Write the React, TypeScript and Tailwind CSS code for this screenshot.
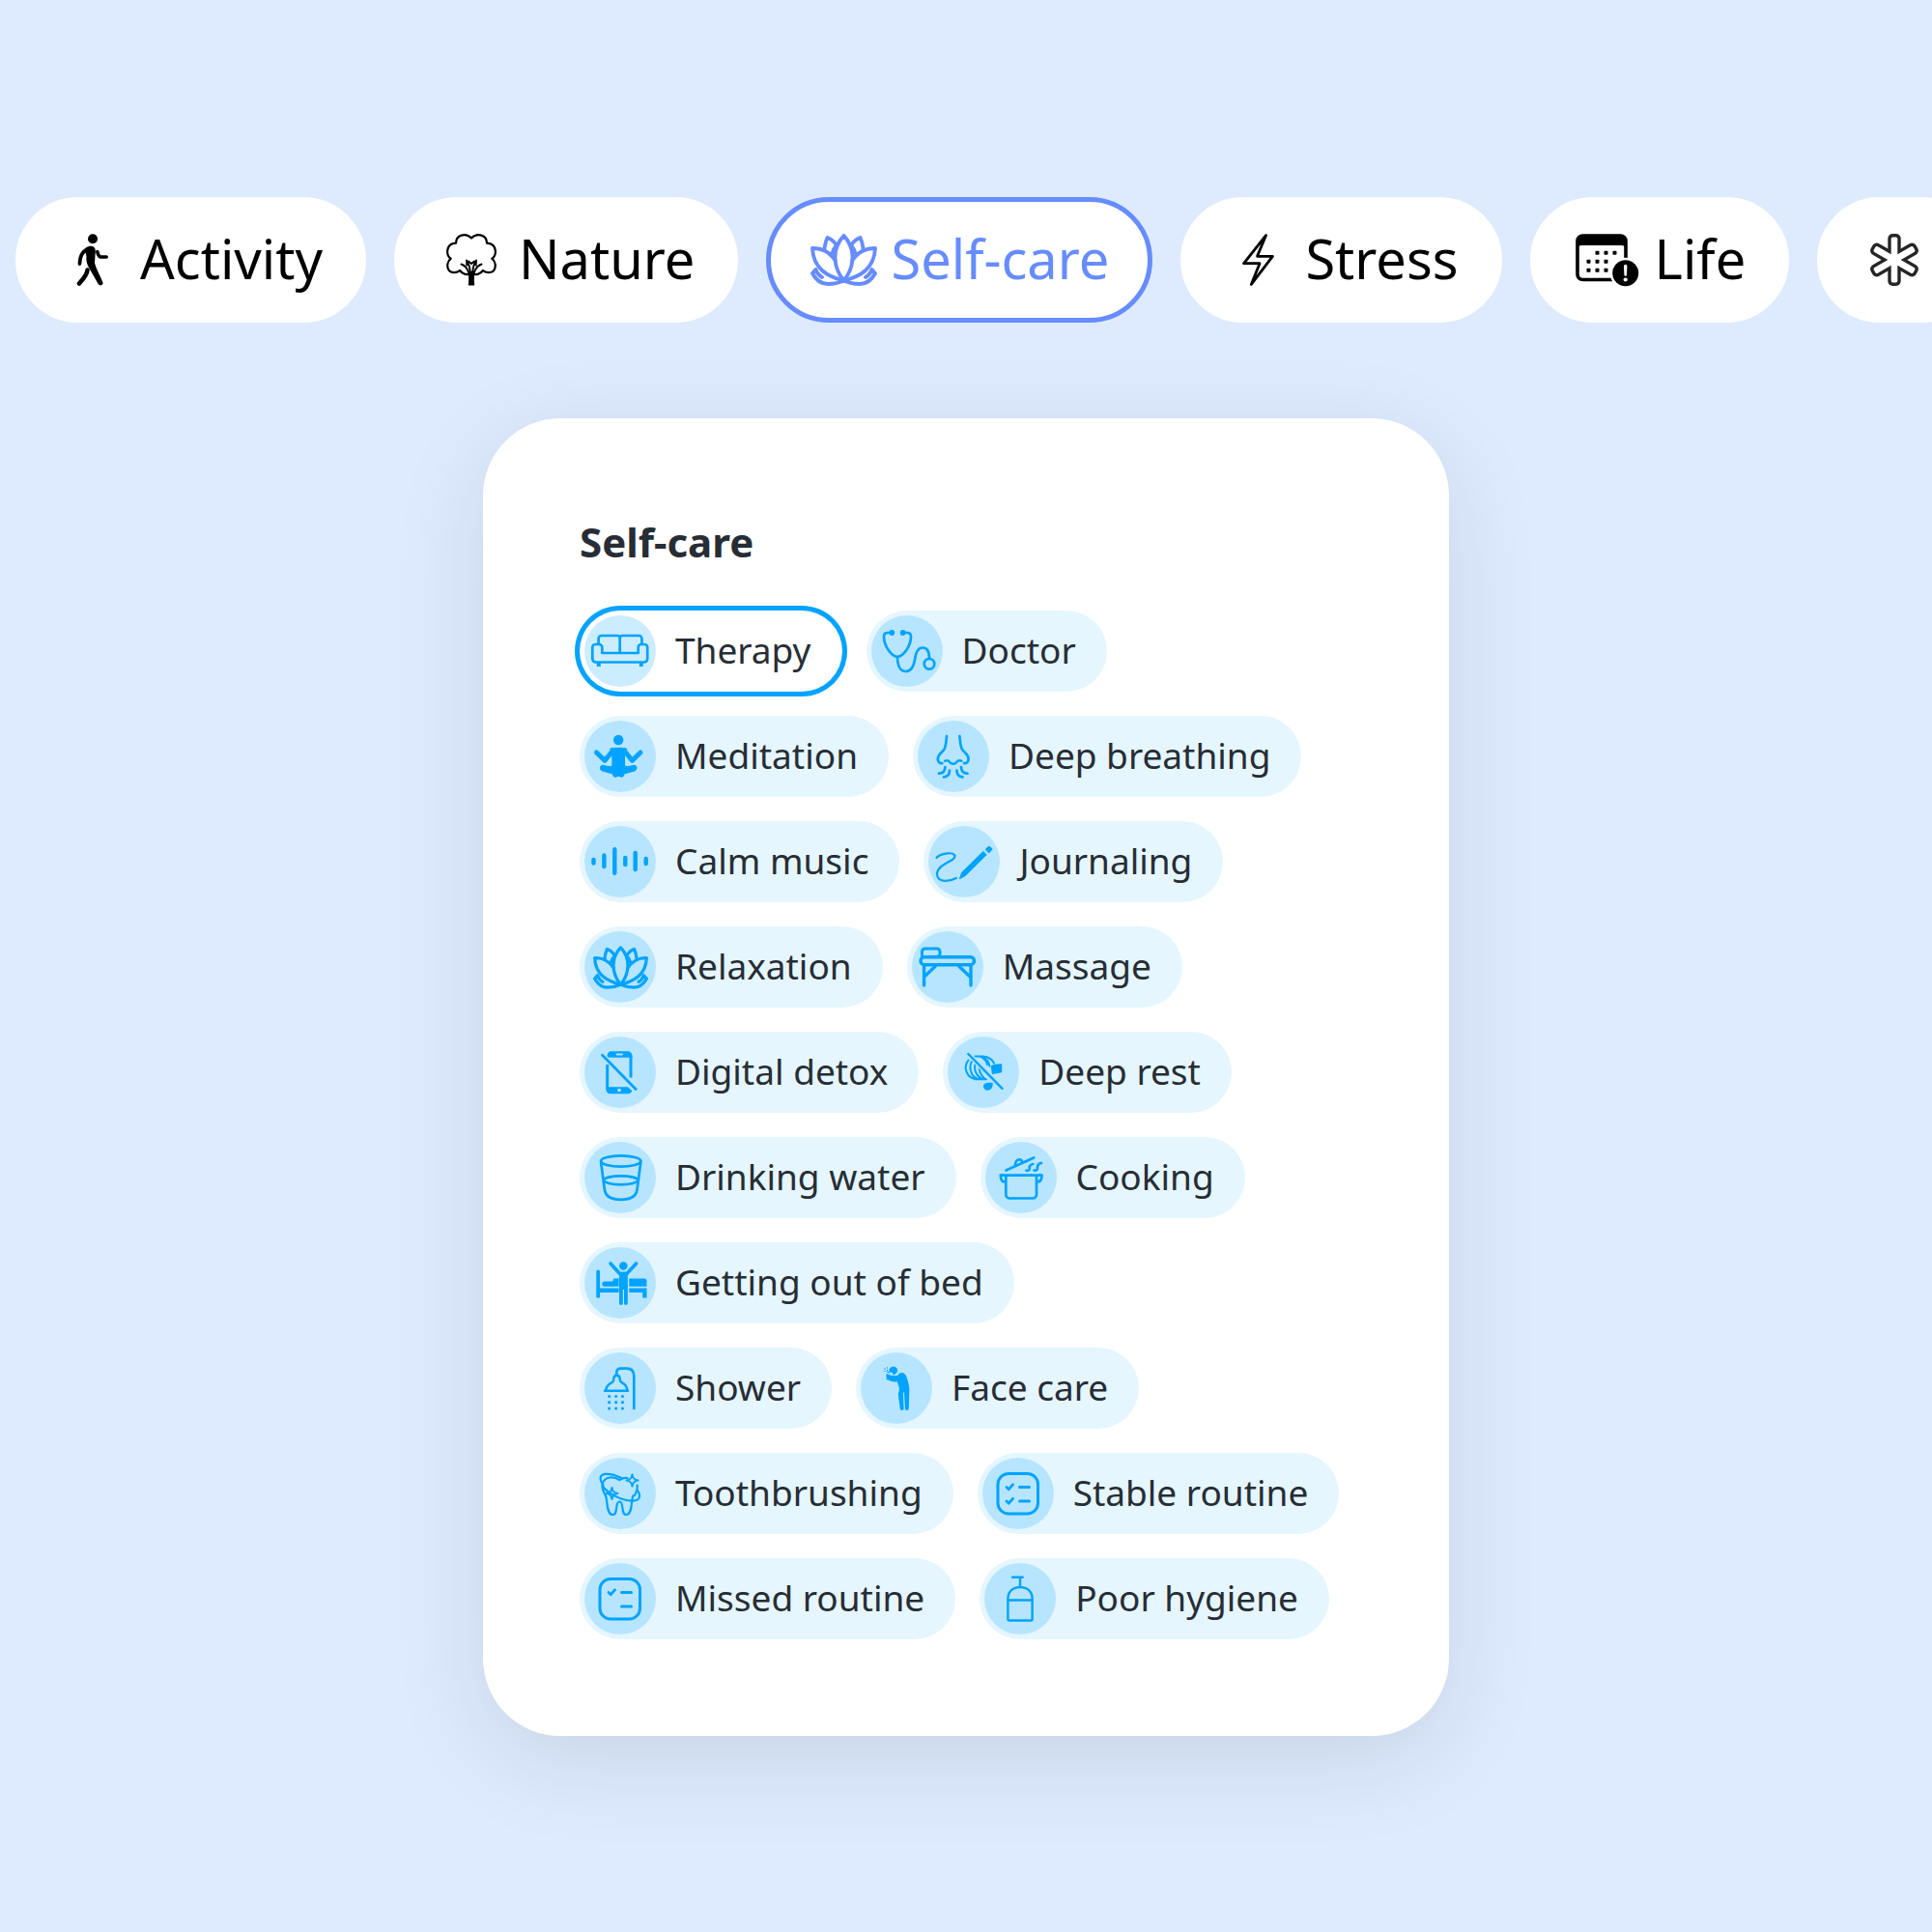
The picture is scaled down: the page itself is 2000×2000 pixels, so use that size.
import { ReactNode, useState } from "react";

const Lotus = ({ className = "" }: { className?: string }) => (
  <svg viewBox="0 0 69 54" className={className} fill="none" stroke="currentColor" strokeWidth="3.900" strokeLinejoin="round" strokeLinecap="round">
    <path d="M34.500 2C28 9 25 18 25.500 26c.5 10 4.500 17 9 22.500 4.500-5.500 8.500-12.500 9-22.500C44 18 41 9 34.500 2Z" />
    <path d="M34.500 48.500C17 44 3 36 2 15c9-.7 18 4 23.500 12.500M34.500 48.500C52 44 66 36 67 15c-9-.7-18 4-23.500 12.500" />
    <path d="M14.500 15.500C15 11 16 7 17.500 4c4 1.500 7.500 4.500 9.800 8.500M22.500 20c1-3.500 2.500-6 4.800-8M54.500 15.500C54 11 53 7 51.500 4c-4 1.500-7.500 4.500-9.800 8.500M46.500 20c-1-3.500-2.500-6-4.800-8" />
    <path d="M5.500 37 2 41C6 48.500 11 52 18 52c6 0 11-1 16.500-3.500M5.500 37C7 41 9 43.500 12 45M63.500 37l3.500 4C63 48.500 58 52 51 52c-6 0-11-1-16.500-3.500M63.500 37C62 41 60 43.500 57 45" />
  </svg>
);

const Walking = () => (
  <svg viewBox="0 0 34 54" className="h-[54px] w-[34px]" fill="none" stroke="currentColor" strokeLinecap="round" strokeLinejoin="round">
    <circle cx="17" cy="5.200" r="5" fill="currentColor" stroke="none" />
    <path d="M9 16c1.500-2 4-3.500 6.500-3.300 3.500.3 4.500 3 4.300 6L19 30c1 5 6 14 8.500 20.500.5 2.500-3 4-4.800 1.600L13 35c-2-4-3-7-2.500-11Z" fill="currentColor" stroke="none" />
    <path d="M12 15.500C7 18.500 4 21.500 3.500 31" strokeWidth="3.800" />
    <path d="M11.500 37.500C11 43 7 47 3 51.500" strokeWidth="4.500" />
    <path d="M21.800 18.500c.6 3.500 1.200 4.500 3 5.500h6.400" strokeWidth="3.600" />
  </svg>
);

const Tree = () => (
  <svg viewBox="0 0 54 54" className="h-[54px] w-[54px]" fill="none" stroke="currentColor" strokeWidth="2.200" strokeLinecap="round" strokeLinejoin="round">
    <path d="M15 38c-2.500 2.800-9.500 3-11.500-.5-2.300-4-1.300-9 2.200-11.800C1 22.500-.5 10.500 11 9.700 11 1 21-1.500 27 4.500 33-1.500 43 1 43 9.700c11.500.8 10 12.800 5.300 16 3.500 2.800 4.500 7.800 2.200 11.800-2 3.500-9 3.300-11.500.5-2 2.500-6 4.300-9 4M15 38c2 2.500 6 4.300 9 4" />
    <path d="M24.700 52.700c.6-5 .6-10-.7-13h6c-1.300 3-1.300 8-.7 13Z" fill="currentColor" strokeWidth="1.800" />
    <path d="M24 40c-1.200-4-3.200-7-7.500-8.500M30 40c1.200-4 3.200-7 7.500-8.500M25.800 40c-.3-5-1.600-9-3.800-12.500l.3 5M28.200 40c.3-5 1.600-9 3.800-12.500l-.3 5M24 28.500l3 2.500 3-2.500" strokeWidth="1.900" />
  </svg>
);

const Bolt = () => (
  <svg viewBox="0 0 33 54" className="h-[54px] w-[33px]" fill="none" stroke="currentColor" strokeWidth="2.800" strokeLinejoin="round">
    <path d="M24.500 1.600 1.600 30.700H18L9.300 52.400 31.400 23.300H15.500Z" />
  </svg>
);

const CalendarAlert = () => (
  <svg viewBox="0 0 66 55" className="h-[55px] w-[66px]">
    <rect x="2" y="2" width="50" height="45.500" rx="5.500" fill="none" stroke="currentColor" strokeWidth="3.600" />
    <path d="M2 16V6a5 5 0 0 1 5-5h40a5 5 0 0 1 5 5v10c0-2.500-2-4-4-4H6c-2 0-4 1.500-4 4Z" fill="currentColor" />
    {[[22.5, 19.7], [31.5, 19.7], [40.5, 19.7], [13.5, 28.7], [22.5, 28.7], [31.5, 28.7], [13.5, 37.7], [22.5, 37.7], [31.5, 37.7]].map(([x, y]) => (
      <rect key={`${x}-${y}`} x={x - 2} y={y - 2} width="4" height="4" rx=".8" fill="currentColor" />
    ))}
    <circle cx="51.700" cy="40.700" r="16" fill="white" />
    <circle cx="51.700" cy="40.700" r="13.500" fill="currentColor" />
    <path d="M50 33.500a1.700 1.700 0 0 1 3.400 0L53 42.500a1.300 1.300 0 0 1-2.600 0Z" fill="white" />
    <circle cx="51.700" cy="47.500" r="2.100" fill="white" />
  </svg>
);

const Asterisk = () => (
  <svg viewBox="0 0 54 54" className="h-[54px] w-[54px]">
    {[0, 60, 120].map((a) => (
      <rect key={a} x="20.300" y="0" width="13.400" height="54" rx="5" fill="#262626" transform={`rotate(${a} 27 27)`} />
    ))}
    {[0, 60, 120].map((a) => (
      <rect key={a} x="23.700" y="3.400" width="6.600" height="47.200" rx="1.800" fill="white" transform={`rotate(${a} 27 27)`} />
    ))}
  </svg>
);

const checklist = (
  <>
    <rect x="16" y="16.500" width="41.500" height="41.500" rx="11" strokeWidth="3" />
    <path d="M38.500 30.500h10M38.500 45h10" strokeWidth="3" />
    <path d="m25 30.500 2.300 2.200 4.200-4.900" strokeWidth="2.800" />
  </>
);

// all chip icons are drawn on a 74x74 grid, the size of the round badge
const icons: Record<string, ReactNode> = {
  sofa: (
    <>
      <path d="M14.600 29.500V24a3 3 0 0 1 3-3H34a2.700 2.700 0 0 1 2.700 2.700V39M36.700 23.700A2.700 2.700 0 0 1 39.400 21h17a3 3 0 0 1 3 3v5.500" />
      <path d="M18.300 39h37.400v-6a3 3 0 0 1 3-3h3.500a3 3 0 0 1 3 3v12a3.500 3.500 0 0 1-3.500 3.500H11.800A3.500 3.500 0 0 1 8.300 45V33a3 3 0 0 1 3-3h4a3 3 0 0 1 3 3Z" />
      <path d="M14.800 49v4M58.800 49v4" strokeWidth="4" strokeLinecap="butt" />
    </>
  ),
  stethoscope: (
    <>
      <path d="M21 18h-4c-3 0-4 1.500-4 4 0 9 7 20 14 21 7-1 14-12 14-21 0-2.500-1-4-4-4h-4" />
      <path d="M27 43c0 9 3 15 8.500 15 6.500 0 8.500-6 9.500-12 1-8 3-12.500 8-12.500s7 4.500 7 11" />
      <circle cx="60" cy="50.300" r="5.300" />
      <circle cx="21.300" cy="18" r="2.900" fill="currentColor" stroke="none" />
      <circle cx="32.700" cy="18" r="2.900" fill="currentColor" stroke="none" />
    </>
  ),
  meditation: (
    <>
      <circle cx="35.200" cy="20" r="5.200" fill="currentColor" stroke="none" />
      <path d="m12.500 33 8.500 8.300 8-9.800M58 33l-8.500 8.300-8-9.800" strokeWidth="5" />
      <path d="M27 29c1.500-1 14.500-1 16.500 0l-2 6v12c4 1.500 7-.5 10.500-.7 2.500 0 2.500 4.500.5 5.500L41 55c0 2-1 3.500-3 3.200l-2.800-1-2.800 1c-2 .3-3-1-3-3.200l-11.500-3.200c-2-1-2-5.500.5-5.500 3.500.2 7 2.200 10.500.7V35Z" fill="currentColor" strokeWidth="1" />
    </>
  ),
  nose: (
    <>
      <path d="M30 16c-.4 5-.9 10-2.200 13C26 33 20.800 34 20.800 40c0 3 2.200 4.400 4.400 4.200M43.400 16c.4 5 .9 10 2.200 13 1.800 4 7 5 7 11 0 3-2.200 4.400-4.400 4.200" />
      <path d="M28 41.800c2.600-1.300 4-.6 5 .9 2 2.700 5.500 2.700 7.500 0 1-1.500 2.400-2.200 5-.9" strokeWidth="2.400" />
      <path d="M28.400 48c0 4-2 6.500-6.500 6.700M33 51.500c0 4-2 6.600-6 6.900M45 48c0 4 2 6.500 6.500 6.700M40.500 51.500c0 4 2 6.600 6 6.900" />
    </>
  ),
  wave: <path d="M9.500 35v3.500M20.400 30.500v11.500M31.300 24.300v24.400M42.300 33v7M52.700 28v17M63.700 34v5" strokeWidth="4.400" />,
  pen: (
    <>
      <path d="M8.500 33C12 29 24 26.500 27 30c2.500 3.500-5 6.500-10 9.500-6 3.500-9.500 8-7.500 13 2 6 13 5 19.500 1.500" strokeWidth="2.200" />
      <path d="m32.500 54.500 2.300-6.500 22-21.500 3.400 3.300-21.700 21.500Z" fill="currentColor" strokeWidth="1" />
      <path d="m60 24.300 2.800-2.600 2.600 2.400-2.700 2.900Z" fill="currentColor" strokeWidth="2" />
    </>
  ),
  massage: (
    <>
      <rect x="9" y="26.800" width="55.500" height="8" rx="4" strokeWidth="3.400" />
      <path d="M10.500 26V21a3 3 0 0 1 3-3h12.500a3 3 0 0 1 3 3v2.500a2.500 2.500 0 0 1-2.500 2.500" strokeWidth="3" />
      <path d="M12.600 36v20M61 36v20M24 36.500 13.500 46.500M49 36.500l10.500 10" strokeWidth="3.400" />
    </>
  ),
  phone: (
    <>
      <path d="M23.700 29v25M48 20v22.500" strokeWidth="3" strokeLinecap="butt" />
      <path d="M23.500 20.500c0-3 1.500-5.300 4-5.300h17c3 0 5 2 5 5v1.500H25.300Z" fill="currentColor" stroke="none" />
      <path d="M22.300 52.300H45l4.300 4c-.6 1.900-2.400 3-4.800 3H27c-3 0-4.700-2-4.700-4.600Z" fill="currentColor" stroke="none" />
      <path d="M33.500 18.500h5.500" className="stroke-[#b7e5ff]" strokeWidth="1.800" />
      <circle cx="36" cy="55.600" r="1.800" className="fill-[#b7e5ff]" stroke="none" />
      <path d="m18.500 19.300 34.700 35.200" strokeWidth="2.800" />
    </>
  ),
  rest: (
    <>
      <path d="M21.500 24.500c-5.500 6-3 19.500 10 19.800M25.200 25.500c-3.500 5.500-2 17 7.800 18.800M29 28c-2.500 5.500.5 13 6.500 16M33 31.500c-1 5 2 9 5.500 12.500M28.500 44.300H40" strokeWidth="2" />
      <path d="M28.500 20.500h8c5.500.5 9.500 3 11.500 7M33 20.700c6 1 9.500 5 10.500 10M36 22c3 2 4.500 4 5 7" strokeWidth="2" />
      <path d="m45.500 31 3-1.500 7-.5v7.500l-9 1.700Z" fill="currentColor" strokeWidth="1.400" />
      <path d="M37 51.500c0-3.500 4-4.300 9.800-3.500 0 5-2 7.700-5.300 7.700-2.700 0-4.500-1.700-4.500-4.200Z" fill="currentColor" stroke="none" />
      <path d="m21.500 18.200 35 35.500" strokeWidth="5" className="stroke-[#b7e5ff]" />
      <path d="m21.300 18 35.200 35.800" strokeWidth="2.400" />
    </>
  ),
  glass: (
    <>
      <ellipse cx="37.700" cy="20" rx="20.600" ry="5.600" />
      <path d="m17.100 21 3.700 28c.8 7.500 7.500 10.800 16.900 10.800s16.100-3.300 16.900-10.800l3.700-28" />
      <ellipse cx="37.700" cy="39.800" rx="17.500" ry="4.500" />
    </>
  ),
  pot: (
    <>
      <path d="M17 34.700h41M21.300 35v19.500a4 4 0 0 0 4 4H49a4 4 0 0 0 4-4V35" />
      <path d="M20.500 41.500c-3.500 0-4.700-3-4.700-6.800h2M53.800 41.500c3.500 0 4.700-3 4.700-6.800h-2" />
      <path d="m21.500 29.500 28.700-13M31 25c-.5-4.500 2-6.700 4.300-6.700 1.700 0 2.700 1 3.200 3" />
      <path d="M42.500 29.700c5 .3 2.500-2.500 3.500-4.500.6-1.500 1.500-2 3.400-2.200M50.500 29.700c5 .3 2.800-3 3.800-5 .7-1.700 1.500-2.500 3.700-2.700" />
    </>
  ),
  bed: (
    <>
      <path d="M12.300 25.500a1.900 1.900 0 0 1 3.800 0V42.500h19.500v4.500H16.100v5.500h-3.800Z" fill="currentColor" stroke="none" />
      <path d="M21 35.500h8l1.500-3h5.100v8.300H21a2.600 2.600 0 0 1 0-5.300ZM46.300 32.500H62a2.500 2.500 0 0 1 2.500 2.500v5.800H46.300ZM46.300 42.500h18.200v10h-4.300V47H46.300Z" fill="currentColor" stroke="none" />
      <circle cx="40.300" cy="19.500" r="4.300" fill="currentColor" stroke="none" />
      <path d="m27 17 10.500 11.500M53.600 17 43 28.500" strokeWidth="3.600" />
      <path d="M36 26.500c2.500-1.500 6.500-1.500 8.800 0V58a1.900 1.900 0 0 1-3.800 0V44h-1.200v14a1.900 1.900 0 0 1-3.800 0Z" fill="currentColor" stroke="none" />
    </>
  ),
  shower: (
    <>
      <path d="M51.300 58V24.500c0-5-3-7.800-7.800-7.800h-5.800c-3 0-4.400 1.500-4.400 4.600v2" />
      <path d="M21 39.700h24M22 39.200c.8-5 3.500-6.500 6-7.800 2-1 2.300-1.500 2.300-3.900 0-5 6.400-5 6.400 0 0 2.400.3 2.900 2.300 3.900 2.500 1.300 4.700 2.800 5.500 7.800" strokeWidth="2.400" />
      {[45.5, 51.7, 58].map((y) => (
        <path key={y} d={`M25.700 ${y}h.01M32.700 ${y}h.01M39.400 ${y}h.01`} strokeWidth="3.200" />
      ))}
    </>
  ),
  face: (
    <>
      <path d="M30 17c1-2.500 6-3 7.500 0 1 3-1 6-4 5.800 0-2-1.500-2.600-3.500-2.800Z" fill="currentColor" strokeWidth=".6" />
      <path d="M38.500 23.500c2.500-4 7.500-3 9 2 1.500 5 3 9 2.800 14L49.800 58a1.900 1.900 0 0 1-3.900 0L45 41l-1 1 .6 16a1.900 1.900 0 0 1-3.900 0L39 45c-.4-4 1.500-6 .7-9l-2.200-6c-1.500 1-6-.5-11-3.700V22c3 1 8 3.500 12 1.500Z" fill="currentColor" stroke="none" />
      <path d="M27 27.500c3 1.500 5.500 2.400 8.500 2.500M27.500 20l2 1" strokeWidth="1.200" />
      <path d="M25 17h.01M25 19.500h.01M27.500 16h.01M27.500 18.500h.01" strokeWidth="1.300" />
    </>
  ),
  tooth: (
    <>
      <path d="M36.200 23c-5-3.500-15-4.500-17.500 4-1.200 5 1 8 3.300 12.500 2 4.500.5 19.500 7.300 19.500 6 0 1.900-13.500 7-13.500s1 13.500 7 13.500c6.500 0 5-14.500 7-19.500M36.200 23c3-2 5.300-2.300 8.300-2M54.500 28.500c1 4-.5 7-2.500 10.500" strokeWidth="2.200" />
      <path d="M19.500 28.500c-4.500-6.500-4-11.500 3-11.700 5.500-.1 10.500 1.500 15.700 4.200M18.800 29.500c5 7 19 15 30.200 15.200 9 0 9.500-5.500 6-10.700" strokeWidth="2.200" />
      <path d="M49.500 17.500c.6 4 2 5.400 6 6-4 .6-5.400 2-6 6-.6-4-2-5.400-6-6 4-.6 5.400-2 6-6ZM28.500 31c.6 4 2 5.400 6 6-4 .6-5.400 2-6 6-.6-4-2-5.400-6-6 4-.6 5.400-2 6-6Z" strokeWidth="2" />
    </>
  ),
  stable: (
    <>
      {checklist}
      <path d="m25 45 2.300 2.200 4.200-4.900" strokeWidth="2.800" />
    </>
  ),
  missed: checklist,
  bottle: (
    <path d="M29 14.800h10.700M37 15v10M24.400 38.500h25.200M24.400 58V37c0-7.500 5.500-12 12.600-12s12.600 4.500 12.600 12v21a1.500 1.500 0 0 1-1.500 1.500H25.900a1.500 1.500 0 0 1-1.500-1.500Z" strokeWidth="2.400" />
  ),
};

const categories = [
  { label: "Activity", icon: <Walking /> },
  { label: "Nature", icon: <Tree /> },
  { label: "Self-care", icon: <Lotus className="h-[54px] w-[69px]" /> },
  { label: "Stress", icon: <Bolt /> },
  { label: "Life", icon: <CalendarAlert /> },
  { label: "", icon: <Asterisk /> },
];

const rows = [
  [{ label: "Therapy", icon: "sofa" }, { label: "Doctor", icon: "stethoscope" }],
  [{ label: "Meditation", icon: "meditation" }, { label: "Deep breathing", icon: "nose" }],
  [{ label: "Calm music", icon: "wave" }, { label: "Journaling", icon: "pen" }],
  [{ label: "Relaxation", icon: "lotus" }, { label: "Massage", icon: "massage" }],
  [{ label: "Digital detox", icon: "phone" }, { label: "Deep rest", icon: "rest" }],
  [{ label: "Drinking water", icon: "glass" }, { label: "Cooking", icon: "pot" }],
  [{ label: "Getting out of bed", icon: "bed" }],
  [{ label: "Shower", icon: "shower" }, { label: "Face care", icon: "face" }],
  [{ label: "Toothbrushing", icon: "tooth" }, { label: "Stable routine", icon: "stable" }],
  [{ label: "Missed routine", icon: "missed" }, { label: "Poor hygiene", icon: "bottle" }],
];

const Tag = ({ label, icon, selected, onClick }: { label: string; icon: string; selected: boolean; onClick: () => void }) => (
  <button
    type="button"
    aria-pressed={selected}
    onClick={onClick}
    className={`flex h-[84px] shrink-0 items-center gap-5 rounded-full pl-[5px] pr-8 text-[37px] leading-[50px] text-[#272d35] ${
      selected ? "bg-white ring-[5px] ring-[#00a3ff]" : "bg-[#00a3ff]/10"
    }`}
  >
    <span className="flex size-[74px] shrink-0 items-center justify-center rounded-full bg-[#00a3ff]/20 text-[#00a3ff]">
      {icon === "lotus" ? (
        <Lotus className="h-[45px] w-[57px]" />
      ) : (
        <svg viewBox="0 0 74 74" className="size-full" fill="none" stroke="currentColor" strokeWidth="2.700" strokeLinecap="round" strokeLinejoin="round">
          {icons[icon]}
        </svg>
      )}
    </span>
    <span className="whitespace-nowrap pb-0.5">{label}</span>
  </button>
);

const App = () => {
  const [category, setCategory] = useState("Self-care");
  const [tag, setTag] = useState("Therapy");

  return (
    <div className="min-h-screen overflow-hidden bg-[#deebfe] py-[204px] font-['Noto_Sans',sans-serif]">
      <nav className="flex gap-[29px] pl-4">
        {categories.map(({ label, icon }) => (
          <button
            key={label}
            type="button"
            aria-label={label || "More"}
            aria-pressed={category === label}
            onClick={() => setCategory(label)}
            className={`flex h-[130px] shrink-0 items-center gap-[14px] rounded-full border-[5px] bg-white px-10 text-[56px] leading-[72px] ${
              category === label ? "border-[#668cff] text-[#668cff]" : "border-white text-black"
            }`}
          >
            <span className="flex w-[70px] justify-center">{icon}</span>
            <span className="pb-1">{label}</span>
          </button>
        ))}
      </nav>

      <main className="mx-auto mt-[99px] w-full max-w-[1000px] rounded-[80px] bg-white p-[100px] shadow-[0_25px_100px_rgba(0,0,0,0.1)]">
        <h1 className="text-[42px] font-bold leading-[56px] text-[#272d35]">Self-care</h1>
        <div className="mt-[43px] flex flex-col gap-[25px]">
          {rows.map((tags) => (
            <div key={tags[0].label} className="flex flex-wrap gap-[25px]">
              {tags.map(({ label, icon }) => (
                <Tag key={label} label={label} icon={icon} selected={tag === label} onClick={() => setTag(label)} />
              ))}
            </div>
          ))}
        </div>
      </main>
    </div>
  );
};

export default App;
